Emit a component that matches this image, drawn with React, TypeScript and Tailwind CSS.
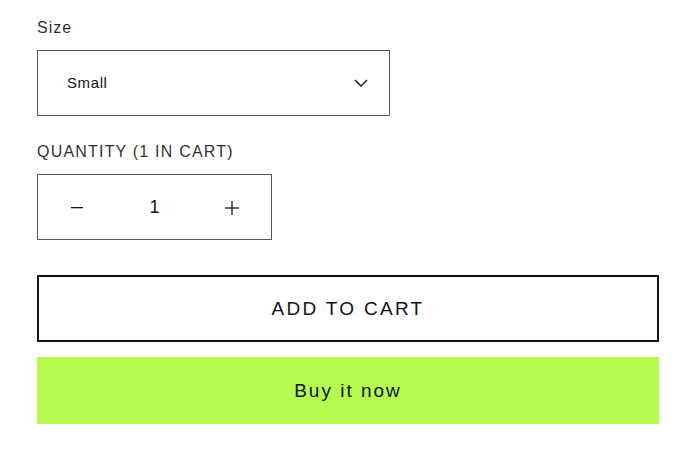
import { useState } from "react";

function Chevron() {
  return (
    <svg width="14" height="8" viewBox="0 0 14 8" fill="none" aria-hidden="true">
      <path d="M1 1l6 6 6-6" stroke="#121212" strokeWidth="1.4" />
    </svg>
  );
}

function Minus() {
  return (
    <svg width="12" height="2" viewBox="0 0 12 2" aria-hidden="true">
      <rect width="12" height="1.3" fill="#121212" />
    </svg>
  );
}

function Plus() {
  return (
    <svg width="14" height="14" viewBox="0 0 14 14" aria-hidden="true">
      <rect x="0" y="6.35" width="14" height="1.3" fill="#121212" />
      <rect x="6.35" y="0" width="1.3" height="14" fill="#121212" />
    </svg>
  );
}

export default function App() {
  const [qty, setQty] = useState(1);

  return (
    <div className="min-h-screen bg-white px-[37px] pt-[18px] text-[#121212] [font-family:'Liberation_Sans',Arial,sans-serif]">
      <p className="text-[16px] leading-[20px] tracking-[1px] text-[#121212]/90">Size</p>
      <div className="mt-[12px] flex h-[66px] w-[353px] items-center justify-between border border-[#121212]/70 pl-[29px] pr-[21px]">
        <span className="pt-[1px] text-[15px] tracking-[0.6px]">Small</span>
        <Chevron />
      </div>

      <p className="mt-[26px] text-[16px] leading-[20px] tracking-[1.2px] text-[#121212]/90">
        QUANTITY (1 IN CART)
      </p>
      <div className="mt-[12px] flex h-[66px] w-[235px] items-center border border-[#121212]/70">
        <button
          type="button"
          onClick={() => setQty((q) => Math.max(1, q - 1))}
          className="flex h-full w-[78px] items-center justify-center pt-[2px]"
        >
          <Minus />
        </button>
        <span className="flex-1 pt-[1px] text-center text-[18px]">{qty}</span>
        <button
          type="button"
          onClick={() => setQty((q) => q + 1)}
          className="flex h-full w-[78px] items-center justify-center pt-[1px]"
        >
          <Plus />
        </button>
      </div>

      <div className="mt-[35px] flex w-[622px] flex-col gap-[15px]">
        <button
          type="button"
          className="h-[67px] w-full border-2 border-[#121212] pt-[2px] text-[19px] tracking-[2.3px]"
        >
          ADD TO CART
        </button>
        <button
          type="button"
          className="h-[67px] w-full bg-[#b5fb4f] pt-[2px] text-[19px] tracking-[2px]"
        >
          Buy it now
        </button>
      </div>
    </div>
  );
}
